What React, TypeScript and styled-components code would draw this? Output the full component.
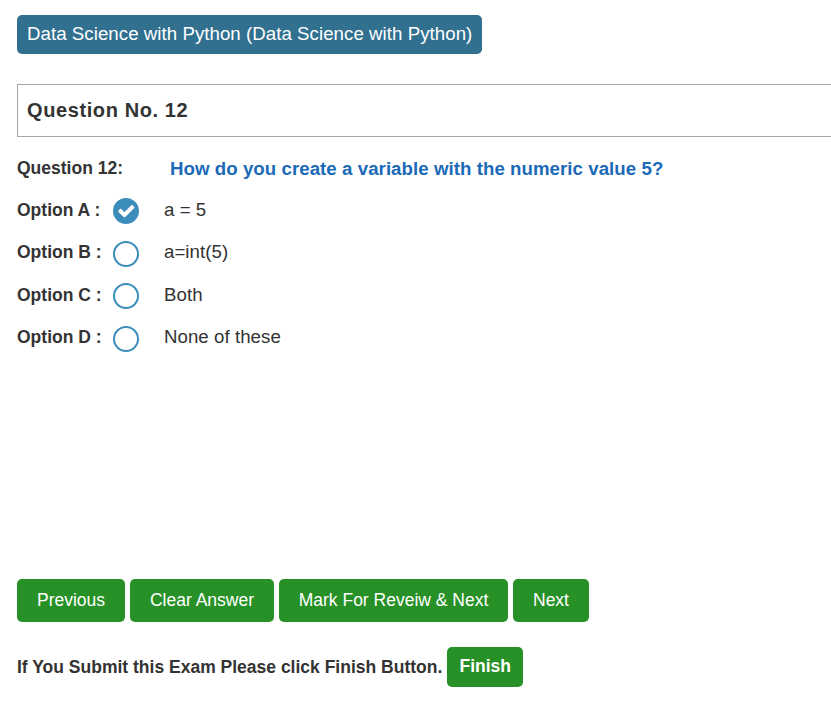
import React, { useState } from 'react';
import styled, { createGlobalStyle } from 'styled-components';

const GlobalStyle = createGlobalStyle`
  *, *::before, *::after { box-sizing: border-box; }
  body {
    margin: 0;
    background: #fff;
    color: #333;
    font-family: "Liberation Sans", Arial, sans-serif;
    overflow: hidden;
  }
`;

const Page = styled.main`
  display: flex;
  flex-direction: column;
  align-items: flex-start;
  height: 712px;
  padding: 15px 0 0 17px;
`;

const SubjectTag = styled.div`
  width: 465px;
  height: 39px;
  padding: 0 10px;
  border-radius: 5px;
  background: #31708f;
  color: #fff;
  font-size: 18.67px;
  letter-spacing: 0.05px;
  line-height: 37px;
  white-space: nowrap;
`;

const QuestionHeader = styled.h1`
  align-self: stretch;
  height: 53px;
  margin: 30px 0 0;
  padding-left: 9px;
  border: 1px solid #aca2a5;
  border-right: 0;
  font-size: 20px;
  line-height: 50px;
  letter-spacing: 0.6px;
`;

const QuestionLine = styled.div`
  display: grid;
  grid-template-columns: 153px auto;
  margin-top: 20px;
  height: 22px;
  line-height: 22px;
  white-space: nowrap;
`;

const Label = styled.span`
  font-size: 17.5px;
  font-weight: 700;
`;

const QuestionText = styled.span`
  color: #1b6ab8;
  font-size: 18.67px;
  font-weight: 700;
  letter-spacing: 0.055px;
  line-height: 24px;
`;

const Options = styled.div`
  display: flex;
  flex-direction: column;
  margin-top: 10px;
`;

const OptionRow = styled.label`
  display: grid;
  grid-template-columns: 96px 51px auto;
  height: 42.4px;
  line-height: 42px;
  cursor: pointer;
`;

const OptionText = styled.span`
  font-size: 18.67px;
  letter-spacing: 0.05px;
`;

const Radio = styled.span<{ $checked: boolean }>`
  display: flex;
  align-items: center;
  justify-content: center;
  width: 26px;
  height: 26px;
  margin-top: 9.4px;
  border: 2px solid #3c8dbc;
  border-radius: 50%;
  background: ${({ $checked }) => ($checked ? '#3c8dbc' : '#fff')};
`;

const HiddenInput = styled.input`
  display: none;
`;

const Actions = styled.div`
  display: flex;
  gap: 5px;
  margin-top: 220.4px;
`;

const Button = styled.button<{ $width: number }>`
  width: ${({ $width }) => $width}px;
  height: 43px;
  padding: 0;
  border: 0;
  border-radius: 5px;
  background: #279127;
  color: #fff;
  font: 17.5px/42px "Liberation Sans", Arial, sans-serif;
  white-space: nowrap;
`;

const Footer = styled.div`
  display: flex;
  align-items: center;
  gap: 5px;
  margin-top: 25px;
  line-height: 22px;
  white-space: nowrap;
`;

const FinishButton = styled(Button)`
  height: 40px;
  padding-bottom: 2px;
  font-weight: 700;
  line-height: 38px;
`;

const options = [
  { key: 'A', text: 'a = 5' },
  { key: 'B', text: 'a=int(5)' },
  { key: 'C', text: 'Both' },
  { key: 'D', text: 'None of these' },
];

const actions = [
  { text: 'Previous', width: 108 },
  { text: 'Clear Answer', width: 144 },
  { text: 'Mark For Reveiw & Next', width: 229 },
  { text: 'Next', width: 76 },
];

const Check = () => (
  <svg width="18.6" height="18.6" viewBox="0 40 1792 1792" fill="#fff">
    <path d="M1671 566q0 40-28 68l-724 724-136 136q-28 28-68 28t-68-28l-136-136-362-362q-28-28-28-68t28-68l136-136q28-28 68-28t68 28l294 295 656-657q28-28 68-28t68 28l136 136q28 28 28 68z" />
  </svg>
);

export default function App() {
  const [selected, setSelected] = useState('A');
  return (
    <>
      <GlobalStyle />
      <Page>
        <SubjectTag>Data Science with Python (Data Science with Python)</SubjectTag>
        <QuestionHeader>Question No. 12</QuestionHeader>
        <QuestionLine>
          <Label>Question 12:</Label>
          <QuestionText>How do you create a variable with the numeric value 5?</QuestionText>
        </QuestionLine>
        <Options>
          {options.map(({ key, text }) => (
            <OptionRow key={key}>
              <Label>Option {key} :</Label>
              <Radio $checked={selected === key}>{selected === key && <Check />}</Radio>
              <OptionText>{text}</OptionText>
              <HiddenInput type="radio" name="answer" checked={selected === key} onChange={() => setSelected(key)} />
            </OptionRow>
          ))}
        </Options>
        <Actions>
          {actions.map(({ text, width }) => (
            <Button key={text} $width={width}>{text}</Button>
          ))}
        </Actions>
        <Footer>
          <Label>If You Submit this Exam Please click Finish Button.</Label>
          <FinishButton $width={76}>Finish</FinishButton>
        </Footer>
      </Page>
    </>
  );
}
